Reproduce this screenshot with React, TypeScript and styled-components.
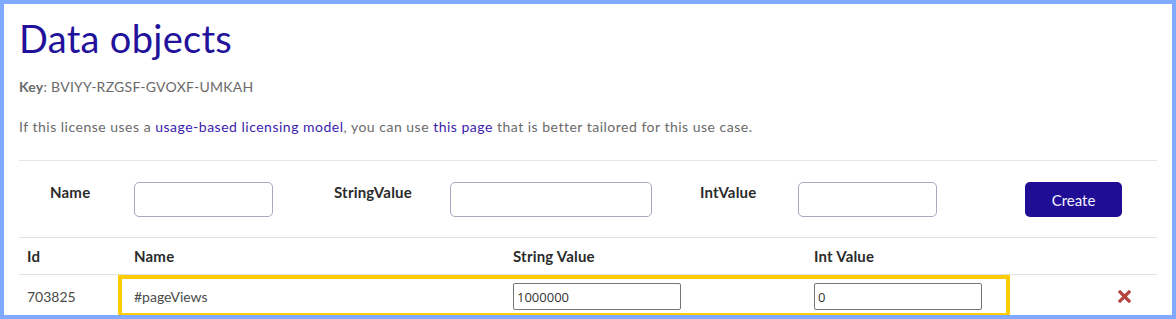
import React from 'react';
import styled, { createGlobalStyle } from 'styled-components';

const GlobalStyle = createGlobalStyle`
  html, body {
    margin: 0;
    padding: 0;
    background: #ffffff;
  }
  body {
    font-family: Lato, "Open Sans", sans-serif;
  }
`;

interface DataObject {
  id: number;
  name: string;
  stringValue: string;
  intValue: number;
}

const rows: DataObject[] = [
  { id: 703825, name: '#pageViews', stringValue: '1000000', intValue: 0 },
];

const Frame = styled.div`
  position: relative;
  box-sizing: border-box;
  width: 1176px;
  height: 319px;
  border: 4px solid #80aaff;
  overflow: hidden;
  padding: 0 15px;
`;

const Title = styled.h1`
  margin: 12px 0 0 0;
  font-size: 38px;
  font-weight: 400;
  line-height: 44px;
  color: #22119a;
  letter-spacing: 0.3px;
`;

const KeyLine = styled.p`
  margin: 17px 0 0 0;
  font-size: 14px;
  line-height: 20px;
  color: #6a6a6a;
  letter-spacing: 0.25px;

  strong {
    font-weight: 700;
  }
`;

const Info = styled.p`
  margin: 20px 0 0 0;
  font-size: 14px;
  line-height: 20px;
  color: #6a6a6a;
  letter-spacing: 0.5px;
`;

const Link = styled.a`
  color: #3a1cae;
  text-decoration: none;
`;

const Divider = styled.hr`
  margin: 23px 0 0 0;
  border: 0;
  border-top: 1px solid #e6e6e6;
  width: 1138px;
`;

const FormRow = styled.div`
  display: grid;
  grid-template-columns: 115px 200px 116px 250px 98px 227px auto;
  align-items: start;
  padding: 21px 0 20px 0;
  border-bottom: 1px solid #e0e0e0;
  width: 1138px;
`;

const FormLabel = styled.label<{ $indent?: number }>`
  padding-left: ${(p) => p.$indent ?? 0}px;
  font-size: 15px;
  font-weight: 700;
  line-height: 20px;
  color: #2b2b2b;
  letter-spacing: 0.2px;
`;

const FormInput = styled.input<{ $width: number }>`
  box-sizing: border-box;
  width: ${(p) => p.$width}px;
  height: 35px;
  border: 1px solid #aaa5c2;
  border-radius: 5px;
  background: #fff;
`;

const CreateButton = styled.button`
  box-sizing: border-box;
  width: 97px;
  height: 35px;
  border: 0;
  border-radius: 5px;
  background: #200d96;
  color: #f4f2ff;
  font-family: Lato, "Open Sans", sans-serif;
  font-size: 15px;
`;

const Table = styled.table`
  width: 1138px;
  border-collapse: collapse;
  table-layout: fixed;
`;

const HeadCell = styled.th<{ $width?: number }>`
  width: ${(p) => (p.$width ? `${p.$width}px` : 'auto')};
  text-align: left;
  padding: 8px;
  height: 20px;
  font-size: 15px;
  font-weight: 700;
  line-height: 20px;
  color: #2b2b2b;
  letter-spacing: 0.2px;
  border-bottom: 1px solid #e0e0e0;
`;

const Cell = styled.td`
  padding: 8px 8px 9px 8px;
  font-size: 14px;
  line-height: 20px;
  color: #4a4a4a;
  vertical-align: middle;
`;

const CellInput = styled.input`
  box-sizing: border-box;
  width: 168px;
  height: 27px;
  border: 1px solid #767676;
  border-radius: 2px;
  padding: 0 3px;
  font-family: "Open Sans", sans-serif;
  font-size: 13px;
  color: #333;
`;

const DeleteButton = styled.button`
  display: flex;
  align-items: center;
  padding: 0;
  margin-left: 1px;
  border: 0;
  background: none;
  cursor: pointer;
`;

const Highlight = styled.div`
  position: absolute;
  left: 114px;
  top: 271px;
  width: 892px;
  height: 42px;
  box-sizing: border-box;
  border: 4px solid #ffcc00;
  pointer-events: none;
`;

const RemoveIcon = () => (
  <svg width="13" height="13" viewBox="0 0 13 13">
    <path d="M2 2 L11 11 M11 2 L2 11" stroke="#b4453f" strokeWidth="3.2" strokeLinecap="square" />
  </svg>
);

const App = () => {
  return (
    <>
      <GlobalStyle />
      <Frame>
        <Title>Data objects</Title>
        <KeyLine>
          <strong>Key</strong>: BVIYY-RZGSF-GVOXF-UMKAH
        </KeyLine>
        <Info>
          If this license uses a <Link href="#">usage-based licensing model</Link>, you can use{' '}
          <Link href="#">this page</Link> that is better tailored for this use case.
        </Info>
        <Divider />
        <FormRow>
          <FormLabel $indent={31}>Name</FormLabel>
          <FormInput $width={139} />
          <FormLabel>StringValue</FormLabel>
          <FormInput $width={202} />
          <FormLabel>IntValue</FormLabel>
          <FormInput $width={139} />
          <CreateButton>Create</CreateButton>
        </FormRow>
        <Table>
          <thead>
            <tr>
              <HeadCell $width={91}>Id</HeadCell>
              <HeadCell $width={363}>Name</HeadCell>
              <HeadCell $width={285}>String Value</HeadCell>
              <HeadCell $width={287}>Int Value</HeadCell>
              <HeadCell />
            </tr>
          </thead>
          <tbody>
            {rows.map((row) => (
              <tr key={row.id}>
                <Cell>{row.id}</Cell>
                <Cell>{row.name}</Cell>
                <Cell>
                  <CellInput defaultValue={row.stringValue} />
                </Cell>
                <Cell>
                  <CellInput defaultValue={String(row.intValue)} />
                </Cell>
                <Cell>
                  <DeleteButton>
                    <RemoveIcon />
                  </DeleteButton>
                </Cell>
              </tr>
            ))}
          </tbody>
        </Table>
        <Highlight />
      </Frame>
    </>
  );
};

export default App;
